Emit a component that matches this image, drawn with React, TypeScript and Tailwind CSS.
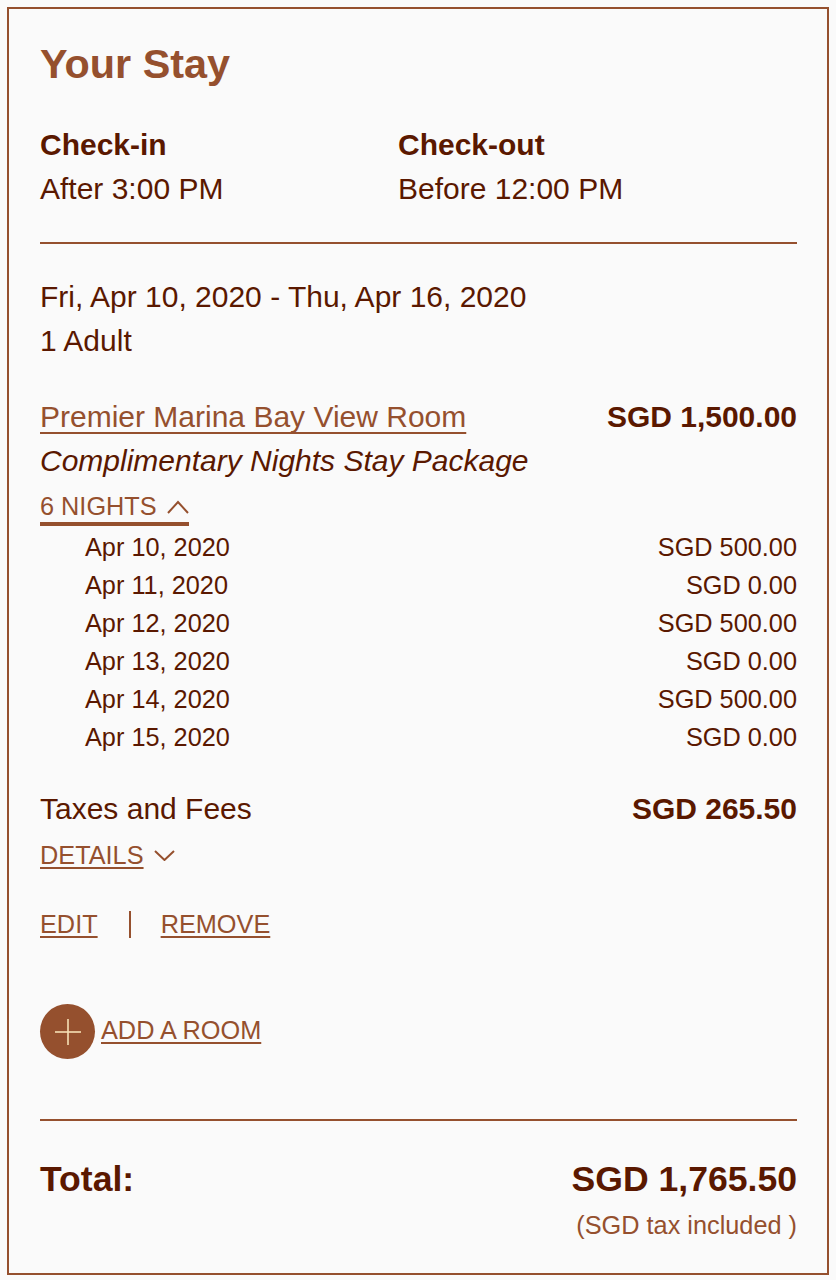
import React from "react";

const nights = [
  ["Apr 10, 2020", "SGD 500.00"],
  ["Apr 11, 2020", "SGD 0.00"],
  ["Apr 12, 2020", "SGD 500.00"],
  ["Apr 13, 2020", "SGD 0.00"],
  ["Apr 14, 2020", "SGD 500.00"],
  ["Apr 15, 2020", "SGD 0.00"],
];

export default function App() {
  return (
    <div
      className="w-[836px] h-[1280px] bg-[#fafafa] pt-[7px] pl-[7px] text-[#5a1800]"
      style={{ fontFamily: '"Liberation Sans", Arial, sans-serif' }}
    >
      <div className="w-[822px] h-[1268px] border-2 border-[#95502e] pl-[31px] pr-[30px] pt-[32px] flex flex-col">
        <h1 className="text-[41.4px] leading-[47px] font-bold text-[#95502e]">Your Stay</h1>

        <div className="mt-[35px] grid grid-cols-[358px_1fr] text-[30px] leading-[44px]">
          <div>
            <div className="font-bold">Check-in</div>
            <div>After 3:00 PM</div>
          </div>
          <div>
            <div className="font-bold">Check-out</div>
            <div>Before 12:00 PM</div>
          </div>
        </div>

        <div className="mt-[31px] h-[2px] bg-[#95502e]" />

        <div className="mt-[31px] text-[30px] leading-[44px]">
          <div>Fri, Apr 10, 2020 - Thu, Apr 16, 2020</div>
          <div>1 Adult</div>
        </div>

        <div className="mt-[32px] flex justify-between text-[30px] leading-[44px]">
          <span className="text-[#95502e] underline decoration-[2px] underline-offset-[5px] [text-decoration-skip-ink:none]">
            Premier Marina Bay View Room
          </span>
          <span className="font-bold">SGD 1,500.00</span>
        </div>
        <div className="text-[30px] leading-[44px] italic">Complimentary Nights Stay Package</div>

        <div className="mt-[8px] flex">
          <div className="flex items-center gap-[10px] border-b-4 border-[#95502e] text-[25.3px] leading-[31px] text-[#95502e]">
            <span>6 NIGHTS</span>
            <svg width="22" height="14" viewBox="0 0 22 14" fill="none" stroke="#95502e" strokeWidth="2">
              <polyline points="1,13 11,2 21,13" />
            </svg>
          </div>
        </div>

        <div className="mt-[2px] pl-[45px] text-[25.3px] leading-[38px]">
          {nights.map(([d, p]) => (
            <div key={d} className="flex justify-between">
              <span>{d}</span>
              <span>{p}</span>
            </div>
          ))}
        </div>

        <div className="mt-[31px] flex justify-between text-[30px] leading-[44px]">
          <span>Taxes and Fees</span>
          <span className="font-bold">SGD 265.50</span>
        </div>

        <div className="mt-[5px] flex items-center gap-[10px] text-[25.3px] leading-[38px] text-[#95502e]">
          <span className="underline decoration-[2px] underline-offset-[3px] [text-decoration-skip-ink:none]">DETAILS</span>
          <svg width="21" height="11" viewBox="0 0 21 11" fill="none" stroke="#95502e" strokeWidth="2">
            <polyline points="1,1 10.5,10 20,1" />
          </svg>
        </div>

        <div className="mt-[31px] flex items-center text-[25.3px] leading-[38px] text-[#95502e]">
          <span className="underline decoration-[2px] underline-offset-[3px] [text-decoration-skip-ink:none]">EDIT</span>
          <span className="ml-[31px] w-[2px] h-[27px] bg-[#95502e]" />
          <span className="ml-[30px] underline decoration-[2px] underline-offset-[3px] [text-decoration-skip-ink:none]">REMOVE</span>
        </div>

        <div className="mt-[61px] flex items-center">
          <div className="w-[55px] h-[55px] rounded-full bg-[#95502e] flex items-center justify-center">
            <svg width="26" height="26" viewBox="0 0 26 26" stroke="#f7e0b5" strokeWidth="1.6">
              <line x1="13" y1="0" x2="13" y2="26" />
              <line x1="0" y1="13" x2="26" y2="13" />
            </svg>
          </div>
          <span className="ml-[6px] mb-[3px] text-[25.3px] leading-[38px] text-[#95502e] underline decoration-[2px] underline-offset-[3px] [text-decoration-skip-ink:none]">
            ADD A ROOM
          </span>
        </div>

        <div className="mt-[60px] h-[2px] bg-[#95502e]" />

        <div className="mt-[37px] flex justify-between text-[35.6px] leading-[42px] font-bold">
          <span>Total:</span>
          <span>SGD 1,765.50</span>
        </div>
        <div className="mt-[6px] text-right text-[25.3px] leading-[38px] text-[#95502e]">(SGD tax included )</div>
      </div>
    </div>
  );
}
